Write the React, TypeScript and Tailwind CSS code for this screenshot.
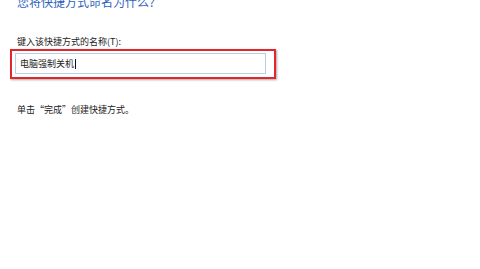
export default function App() {
  return (
    <div
      className="w-[480px] h-[269px] overflow-hidden bg-white text-[#222]"
      style={{ fontFamily: '"Microsoft YaHei", "Noto Sans CJK SC", sans-serif' }}
    >
      <h1 className="-mt-[6px] pl-[17px] h-[16px] text-[12px] leading-[16px] text-[#2c62bd]">
        您将快捷方式命名为什么?
      </h1>

      <div className="mt-[26px] pl-[17px] h-[12px] text-[9px] leading-[12px]">
        键入该快捷方式的名称(T):
      </div>

      <div className="mt-[1px] ml-[10px] w-[266px] h-[30px] border-2 border-[#e3262a] shadow-[1px_1px_2px_rgba(0,0,0,0.35)] pt-[2px] pl-[3px]">
        <div className="w-[251px] h-[21px] border border-[#b7d0e8] flex items-center pl-[4px] text-[9px] leading-[12px]">
          <span>电脑强制关机</span>
          <span className="ml-[1px] w-px h-[10px] bg-[#111]" />
        </div>
      </div>

      <div className="mt-[25px] pl-[17px] h-[12px] text-[9px] leading-[12px]">
        单击“完成”创建快捷方式。
      </div>
    </div>
  );
}
